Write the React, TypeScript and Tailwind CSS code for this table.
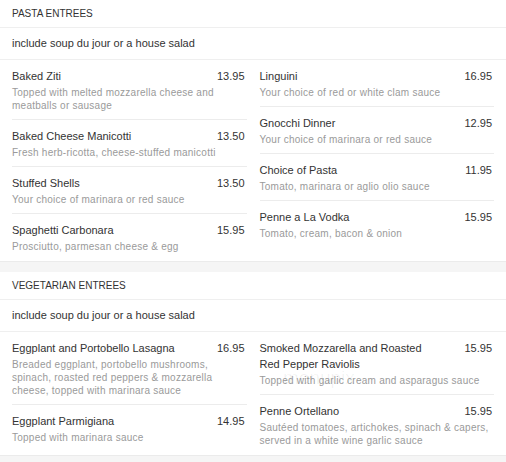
import React from "react";

type Item = { name: string; price: string; desc: string };

const pastaLeft: Item[] = [
  { name: "Baked Ziti", price: "13.95", desc: "Topped with melted mozzarella cheese and meatballs or sausage" },
  { name: "Baked Cheese Manicotti", price: "13.50", desc: "Fresh herb-ricotta, cheese-stuffed manicotti" },
  { name: "Stuffed Shells", price: "13.50", desc: "Your choice of marinara or red sauce" },
  { name: "Spaghetti Carbonara", price: "15.95", desc: "Prosciutto, parmesan cheese & egg" },
];
const pastaRight: Item[] = [
  { name: "Linguini", price: "16.95", desc: "Your choice of red or white clam sauce" },
  { name: "Gnocchi Dinner", price: "12.95", desc: "Your choice of marinara or red sauce" },
  { name: "Choice of Pasta", price: "11.95", desc: "Tomato, marinara or aglio olio sauce" },
  { name: "Penne a La Vodka", price: "15.95", desc: "Tomato, cream, bacon & onion" },
];
const vegLeft: Item[] = [
  {
    name: "Eggplant and Portobello Lasagna",
    price: "16.95",
    desc: "Breaded eggplant, portobello mushrooms, spinach, roasted red peppers & mozzarella cheese, topped with marinara sauce",
  },
  { name: "Eggplant Parmigiana", price: "14.95", desc: "Topped with marinara sauce" },
];
const vegRight: Item[] = [
  {
    name: "Smoked Mozzarella and Roasted Red Pepper Raviolis",
    price: "15.95",
    desc: "Topped with garlic cream and asparagus sauce",
  },
  {
    name: "Penne Ortellano",
    price: "15.95",
    desc: "Sautéed tomatoes, artichokes, spinach & capers, served in a white wine garlic sauce",
  },
];

function MenuItem({ item, last }: { item: Item; last: boolean }) {
  return (
    <div className={"pt-[8px] pb-[7px] " + (last ? "" : "border-b border-[#ececec]")}>
      <div className="flex justify-between items-start text-[11px] leading-[16px] text-[#333]">
        <span className="max-w-[180px]">{item.name}</span>
        <span className="pr-[2px]">{item.price}</span>
      </div>
      <div className="mt-[2px] text-[10px] leading-[13px] tracking-[0.25px] text-[#9a9a9a]">{item.desc}</div>
    </div>
  );
}

function Column({ items }: { items: Item[] }) {
  return (
    <div className="flex flex-col">
      {items.map((it, i) => (
        <MenuItem key={it.name} item={it} last={i === items.length - 1} />
      ))}
    </div>
  );
}

function Section({
  title,
  left,
  right,
  children,
}: {
  title: string;
  left: Item[];
  right: Item[];
  children?: React.ReactNode;
}) {
  return (
    <div className="relative bg-white border-b border-[#ebebeb]">
      <div className="h-[28px] px-3 flex items-center text-[10px] text-[#333] border-b border-[#efefef]">{title}</div>
      <div className="h-[32px] px-3 flex items-center text-[11px] text-[#333] border-b border-[#efefef]">
        include soup du jour or a house salad
      </div>
      <div className="grid grid-cols-2 gap-x-[13px] px-3 pb-[1px]">
        <Column items={left} />
        <Column items={right} />
      </div>
      {children}
    </div>
  );
}

export default function App() {
  return (
    <div className="w-[506px] h-[462px] overflow-hidden bg-[#f5f5f5] font-['Liberation_Sans',Arial,sans-serif]">
      <Section title="PASTA ENTREES" left={pastaLeft} right={pastaRight} />
      <div className="h-[10px]" />
      <Section title="VEGETARIAN ENTREES" left={vegLeft} right={vegRight}>
        <div className="absolute left-[283px] top-[96px] text-[19px] leading-none text-black/[0.06] pointer-events-none select-none">
          menupix
        </div>
      </Section>
    </div>
  );
}
